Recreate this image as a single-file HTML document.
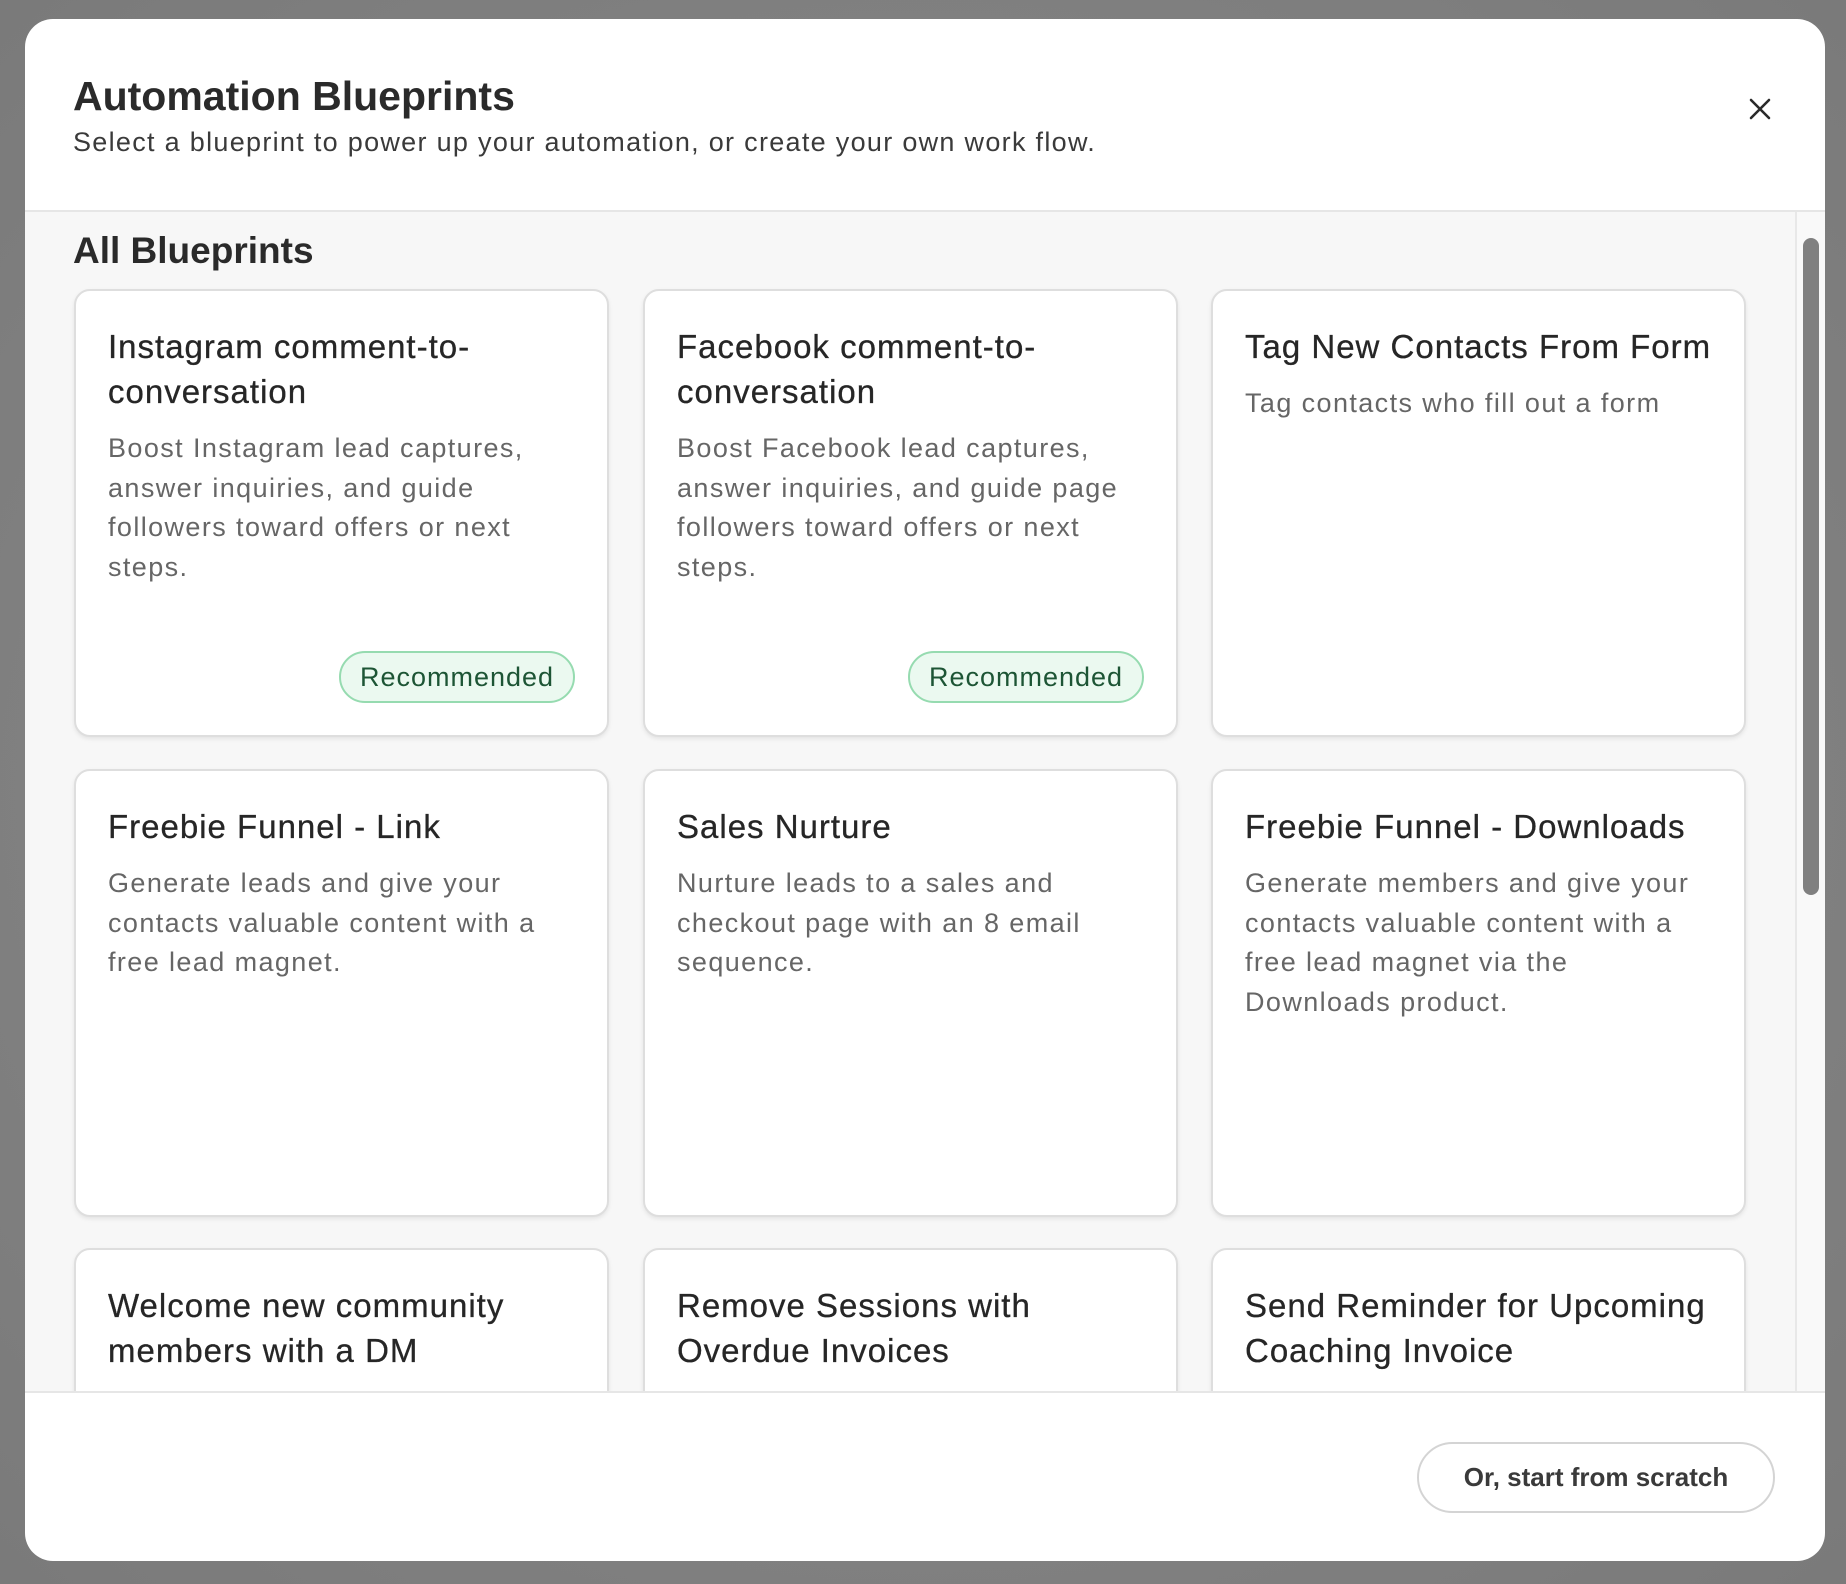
<!DOCTYPE html>
<html><head><style>
*{box-sizing:border-box;margin:0;padding:0}
body{width:1846px;height:1584px;background:radial-gradient(ellipse at center,#8c8c8c,#7a7a7a);font-family:"Liberation Sans",sans-serif;position:relative;overflow:hidden}
.modal{position:absolute;left:25px;top:19px;width:1800px;height:1542px;background:#fff;border-radius:28px;overflow:hidden}
.h1{position:absolute;left:48px;top:54px;font-size:41px;font-weight:bold;color:#2a2a2a;letter-spacing:0px}
.sub{position:absolute;left:48px;top:108px;font-size:27px;color:#3a3a3a;letter-spacing:1.3px}
.close{position:absolute;left:1723px;top:78px;width:24px;height:24px}
.content{position:absolute;left:0;top:191px;width:1800px;height:1183px;background:#f7f7f7;border-top:2px solid #e6e6e6;border-bottom:2px solid #e6e6e6;overflow:hidden}
.track{position:absolute;left:1770px;top:0;width:30px;height:100%;border-left:2px solid #e8e8e8;background:#f9f9f9}
.thumb{position:absolute;left:1778px;top:26px;width:16px;height:657px;background:#808080;border-radius:8px}
.h2{position:absolute;left:48px;top:18px;font-size:37px;font-weight:bold;color:#2a2a2a;letter-spacing:0}
.card{position:absolute;width:535px;height:448px;background:#fff;border:2px solid #dedede;border-radius:16px;box-shadow:0 2px 4px rgba(0,0,0,.08);padding:33px 18px 34px 32px}
.t{font-size:33px;line-height:45px;color:#262626;letter-spacing:1px;-webkit-text-stroke:0.3px #262626}
.d{font-size:27px;line-height:39.6px;color:#666;margin-top:15px;letter-spacing:1.4px;padding-right:12px}
.badge{position:absolute;right:32px;bottom:32px;width:236px;height:52px;border:2px solid #96dbb0;background:#ebf9f0;border-radius:26px;color:#1d5535;font-size:27px;text-align:center;line-height:48px;letter-spacing:1px}
.btn{position:absolute;left:1392px;top:1423px;width:358px;height:71px;border:2px solid #d4d4d4;border-radius:36px;text-align:center;line-height:67px;font-size:26px;font-weight:bold;color:#3a3a3a}
</style></head><body>
<div class="modal">
<div class="h1">Automation Blueprints</div>
<div class="sub">Select a blueprint to power up your automation, or create your own work flow.</div>
<svg class="close" viewBox="0 0 24 24"><path d="M3 3L21 21M21 3L3 21" stroke="#2a2a2a" stroke-width="2.6" stroke-linecap="round"/></svg>
<div class="content">
<div class="h2">All Blueprints</div>
<div class="card" style="left:49px;top:77px"><div class="t">Instagram comment-to-conversation</div><div class="d">Boost Instagram lead captures, answer inquiries, and guide followers toward offers or next steps.</div><div class="badge">Recommended</div></div>
<div class="card" style="left:618px;top:77px"><div class="t">Facebook comment-to-conversation</div><div class="d">Boost Facebook lead captures, answer inquiries, and guide page followers toward offers or next steps.</div><div class="badge">Recommended</div></div>
<div class="card" style="left:1186px;top:77px"><div class="t">Tag New Contacts From Form</div><div class="d">Tag contacts who fill out a form</div></div>
<div class="card" style="left:49px;top:557px"><div class="t">Freebie Funnel - Link</div><div class="d">Generate leads and give your contacts valuable content with a free lead magnet.</div></div>
<div class="card" style="left:618px;top:557px"><div class="t">Sales Nurture</div><div class="d">Nurture leads to a sales and checkout page with an 8 email sequence.</div></div>
<div class="card" style="left:1186px;top:557px"><div class="t">Freebie Funnel - Downloads</div><div class="d">Generate members and give your contacts valuable content with a free lead magnet via the Downloads product.</div></div>
<div class="card" style="left:49px;top:1036px"><div class="t">Welcome new community members with a DM</div></div>
<div class="card" style="left:618px;top:1036px"><div class="t">Remove Sessions with Overdue Invoices</div></div>
<div class="card" style="left:1186px;top:1036px"><div class="t">Send Reminder for Upcoming Coaching Invoice</div></div>
<div class="track"></div><div class="thumb"></div>
</div>
<div class="btn">Or, start from scratch</div>
</div>
</body></html>
